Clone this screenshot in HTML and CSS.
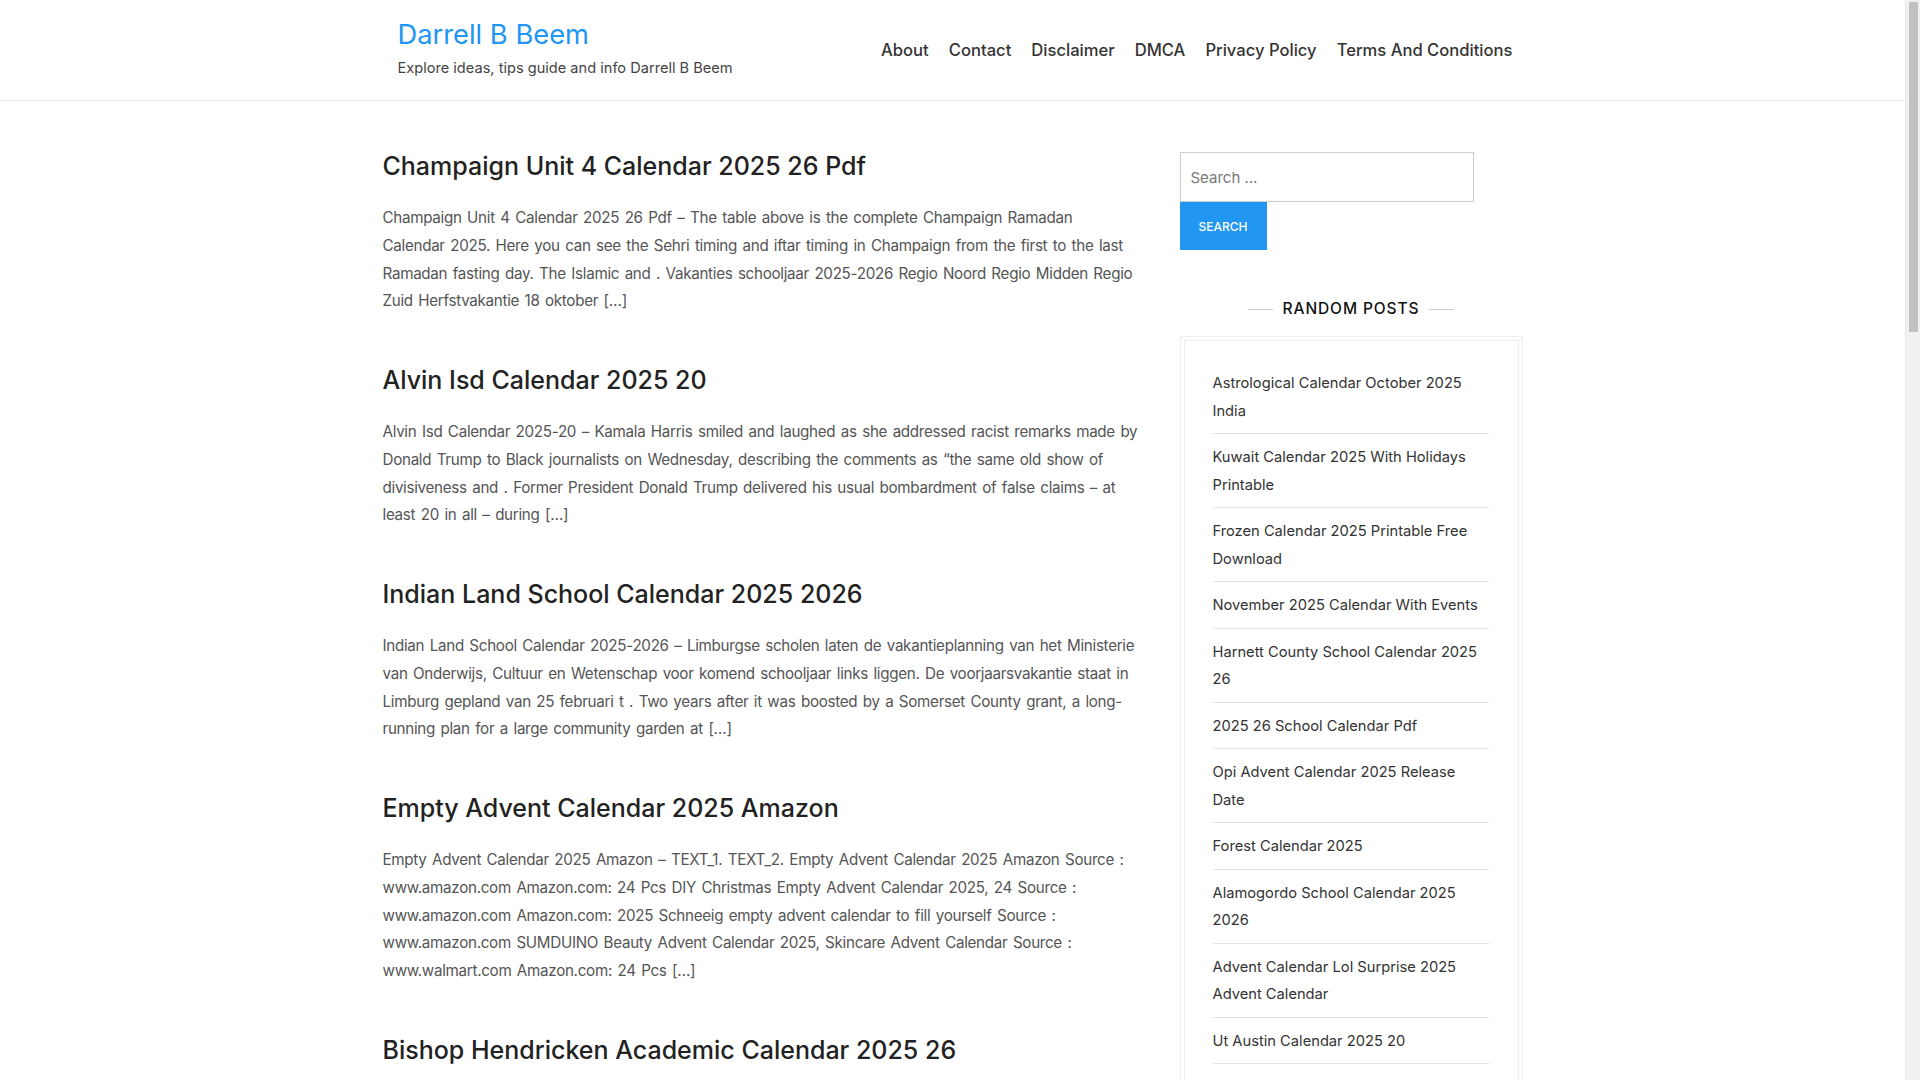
FILE: index.html
```html
<!DOCTYPE html>
<html lang="en">
<head>
<meta charset="utf-8">
<title>Darrell B Beem</title>
<link rel="stylesheet" href="styles.css">
</head>
<body>
<div class="page">
<header class="site-header">
  <div class="container header-inner">
    <div class="branding">
      <p class="site-title"><a href="#">Darrell B Beem</a></p>
      <p class="site-description">Explore ideas, tips guide and info Darrell B Beem</p>
    </div>
    <nav class="main-nav">
      <ul class="menu">
        <li><a href="#">About</a></li>
        <li><a href="#">Contact</a></li>
        <li><a href="#">Disclaimer</a></li>
        <li><a href="#">DMCA</a></li>
        <li><a href="#">Privacy Policy</a></li>
        <li><a href="#">Terms And Conditions</a></li>
      </ul>
    </nav>
  </div>
</header>

<div class="container layout">
  <main class="posts">
    <article class="post">
      <h2 class="post-title"><a href="#">Champaign Unit 4 Calendar 2025 26 Pdf</a></h2>
      <p class="post-excerpt">Champaign Unit 4 Calendar 2025 26 Pdf – The table above is the complete Champaign Ramadan Calendar 2025. Here you can see the Sehri timing and iftar timing in Champaign from the first to the last Ramadan fasting day. The Islamic and . Vakanties schooljaar 2025-2026 Regio Noord Regio Midden Regio Zuid Herfstvakantie 18 oktober […]</p>
    </article>
    <article class="post">
      <h2 class="post-title"><a href="#">Alvin Isd Calendar 2025 20</a></h2>
      <p class="post-excerpt">Alvin Isd Calendar 2025-20 – Kamala Harris smiled and laughed as she addressed racist remarks made by Donald Trump to Black journalists on Wednesday, describing the comments as “the same old show of divisiveness and . Former President Donald Trump delivered his usual bombardment of false claims – at least 20 in all – during […]</p>
    </article>
    <article class="post">
      <h2 class="post-title"><a href="#">Indian Land School Calendar 2025 2026</a></h2>
      <p class="post-excerpt">Indian Land School Calendar 2025-2026 – Limburgse scholen laten de vakantieplanning van het Ministerie van Onderwijs, Cultuur en Wetenschap voor komend schooljaar links liggen. De voorjaarsvakantie staat in Limburg gepland van 25 februari t . Two years after it was boosted by a Somerset County grant, a long-running plan for a large community garden at […]</p>
    </article>
    <article class="post">
      <h2 class="post-title"><a href="#">Empty Advent Calendar 2025 Amazon</a></h2>
      <p class="post-excerpt">Empty Advent Calendar 2025 Amazon – TEXT_1. TEXT_2. Empty Advent Calendar 2025 Amazon Source : www.amazon.com Amazon.com: 24 Pcs DIY Christmas Empty Advent Calendar 2025, 24 Source : www.amazon.com Amazon.com: 2025 Schneeig empty advent calendar to fill yourself Source : www.amazon.com SUMDUINO Beauty Advent Calendar 2025, Skincare Advent Calendar Source : www.walmart.com Amazon.com: 24 Pcs […]</p>
    </article>
    <article class="post">
      <h2 class="post-title"><a href="#">Bishop Hendricken Academic Calendar 2025 26</a></h2>
      <p class="post-excerpt">Bishop Hendricken Academic Calendar 2025 26 – The academic calendar lists the start and end of each term, holidays, exam periods and other important dates for students and families during the school year […]</p>
    </article>
  </main>

  <aside class="sidebar">
    <form class="search-form">
      <input class="search-field" type="search" placeholder="Search …">
      <button class="search-submit" type="button">Search</button>
    </form>

    <section class="widget">
      <h3 class="widget-title"><span>Random Posts</span></h3>
      <div class="widget-box">
        <div class="widget-inner">
          <ul class="post-list">
            <li><a href="#">Astrological Calendar October 2025 India</a></li>
            <li><a href="#">Kuwait Calendar 2025 With Holidays Printable</a></li>
            <li><a href="#">Frozen Calendar 2025 Printable Free Download</a></li>
            <li><a href="#">November 2025 Calendar With Events</a></li>
            <li><a href="#">Harnett County School Calendar 2025 26</a></li>
            <li><a href="#">2025 26 School Calendar Pdf</a></li>
            <li><a href="#">Opi Advent Calendar 2025 Release Date</a></li>
            <li><a href="#">Forest Calendar 2025</a></li>
            <li><a href="#">Alamogordo School Calendar 2025 2026</a></li>
            <li><a href="#">Advent Calendar Lol Surprise 2025 Advent Calendar</a></li>
            <li><a href="#">Ut Austin Calendar 2025 20</a></li>
            <li><a href="#">Mcps Calendar 2025 26</a></li>
          </ul>
        </div>
      </div>
    </section>
  </aside>
</div>
</div>

<div class="scrollbar" aria-hidden="true"><div class="scrollbar-thumb"></div></div>
</body>
</html>
```
FILE: styles.css
```css
* { box-sizing: border-box; }

html, body {
  margin: 0;
  padding: 0;
  background: #fff;
}

body {
  font-family: "Inter", "Open Sans", sans-serif;
  font-size: 14.7px;
  color: #555;
}

a { text-decoration: none; color: inherit; }

p { margin: 0; }

.page {
  margin-right: 15px;
}

.container {
  width: 1140px;
  margin: 0 auto;
}

/* Header */
.site-header {
  border-bottom: 1px solid #e6e6e6;
}

.header-inner {
  height: 100px;
  display: flex;
  justify-content: space-between;
  align-items: center;
}

.branding {
  padding-left: 15px;
  padding-bottom: 2px;
}

.site-title {
  font-size: 27.3px;
  line-height: 34px;
  font-weight: 400;
  color: #2196f3;
  margin-bottom: 4px;
}

.site-description {
  font-size: 14.6px;
  line-height: 24px;
  color: #444;
}

.menu {
  list-style: none;
  display: flex;
  margin: 0;
  padding: 0;
}

.menu li a {
  display: block;
  padding: 0 10px;
  font-size: 16.6px;
  font-weight: 500;
  color: #333;
  line-height: 24px;
}

/* Layout */
.layout {
  display: flex;
  justify-content: space-between;
  padding-top: 48px;
}

.posts {
  width: 756.2px;
}

.post {
  margin-bottom: 48px;
}

.post-title {
  margin: 0 0 21px;
  font-size: 25px;
  line-height: 34px;
  font-weight: 500;
  color: #222;
}

.post-excerpt {
  font-size: 15.2px;
  line-height: 27.75px;
  letter-spacing: -0.3px;
  word-spacing: 1.5px;
  color: #555;
}

/* Sidebar */
.sidebar {
  width: 343px;
  padding-top: 3px;
}

.search-form {
  display: flex;
  flex-direction: column;
  align-items: flex-start;
}

.search-field {
  width: 294px;
  height: 50px;
  border: 1px solid #ccc;
  padding: 0 10px;
  font-family: inherit;
  font-size: 15px;
  color: #555;
  outline: none;
}

.search-field::placeholder { color: #777; }

.search-submit {
  width: 87px;
  height: 48px;
  border: 0;
  background: #2196f3;
  color: #fff;
  font-family: inherit;
  font-size: 12px;
  font-weight: 500;
  text-transform: uppercase;
}

.widget {
  margin-top: 46px;
}

.widget-title {
  margin: 0 0 14px;
  text-align: center;
  font-size: 15.5px;
  line-height: 26px;
  font-weight: 500;
  letter-spacing: 0.9px;
  color: #111;
  text-transform: uppercase;
  display: flex;
  justify-content: center;
  align-items: center;
  gap: 10px;
}

.widget-title::before,
.widget-title::after {
  content: "";
  width: 25px;
  height: 1px;
  background: #ccc;
}

.widget-box {
  border: 1px solid #eee;
  padding: 3px;
}

.widget-inner {
  border: 1px solid #eee;
  padding: 19px 29px 20px 28px;
}

.post-list {
  list-style: none;
  margin: 0;
  padding: 0;
}

.post-list li {
  padding: 10px 0 8px;
  border-bottom: 1px solid #e2e2e2;
  font-size: 14.7px;
  line-height: 27.5px;
  color: #333;
}

/* Emulated browser scrollbar (overlay at the right edge) */
.scrollbar {
  position: fixed;
  top: 0;
  right: 0;
  width: 15px;
  height: 100vh;
  background: #f1f1f1;
  border-left: 1px solid #e8e8e8;
}

.scrollbar-thumb {
  margin: 2px 2px 0 3px;
  height: 330px;
  background: #c1c1c1;
  border-radius: 1px;
}
```
